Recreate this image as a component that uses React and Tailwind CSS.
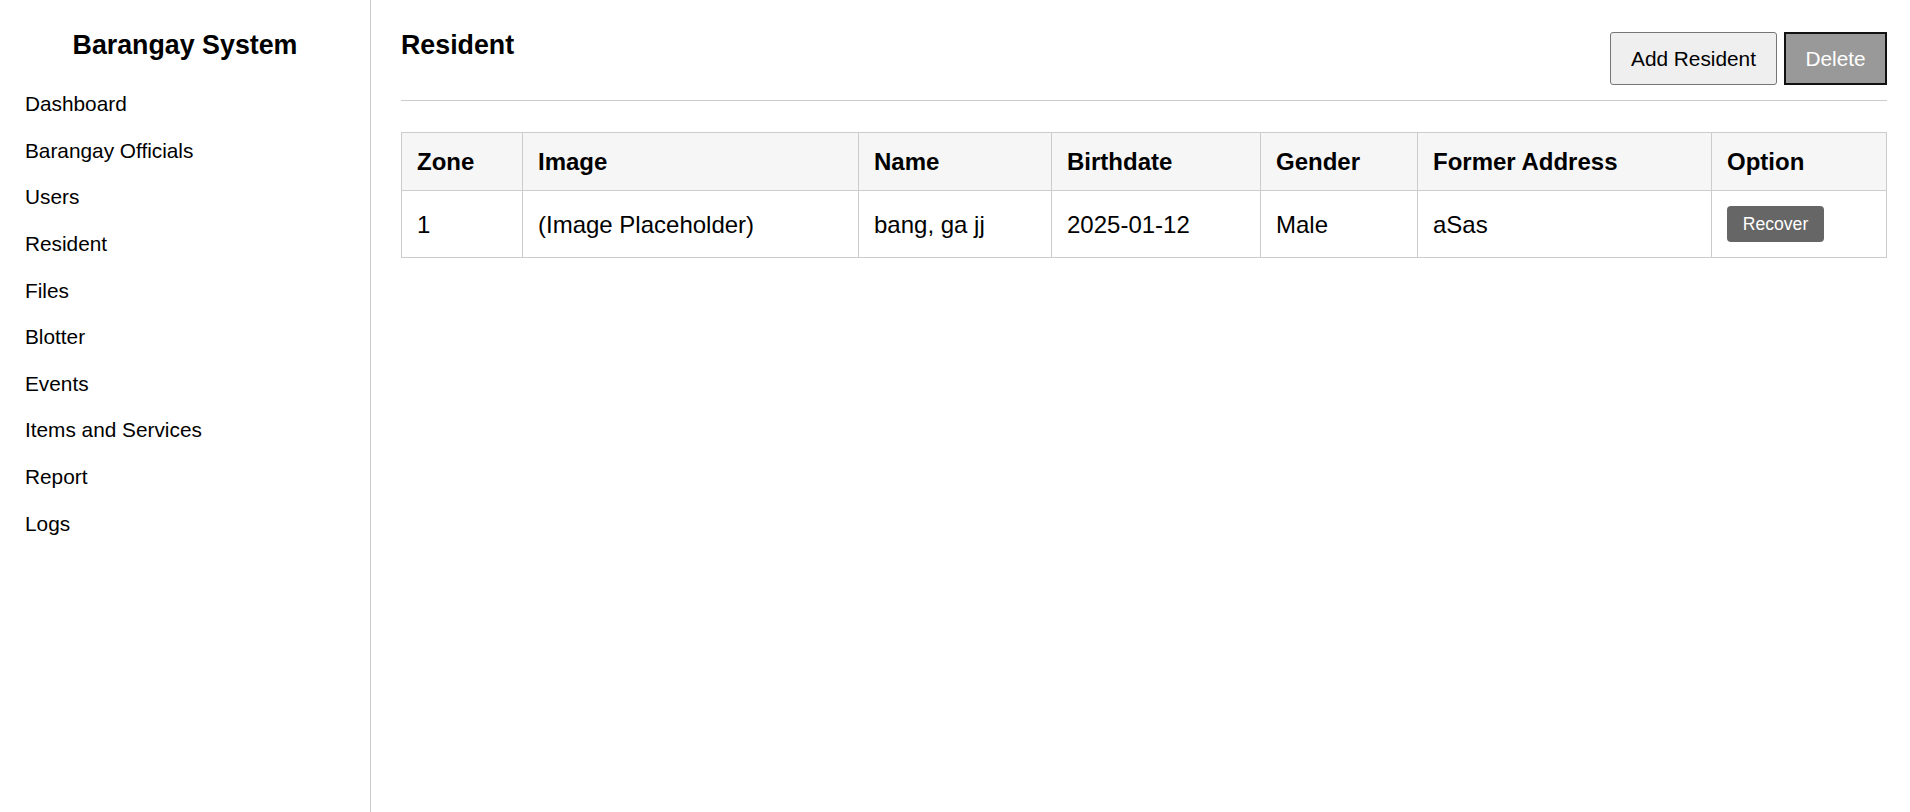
const menu = [
  "Dashboard",
  "Barangay Officials",
  "Users",
  "Resident",
  "Files",
  "Blotter",
  "Events",
  "Items and Services",
  "Report",
  "Logs",
];

const columns = [
  { label: "Zone", w: "w-[121px]" },
  { label: "Image", w: "w-[336px]" },
  { label: "Name", w: "w-[193px]" },
  { label: "Birthdate", w: "w-[209px]" },
  { label: "Gender", w: "w-[157px]" },
  { label: "Former Address", w: "w-[294px]" },
  { label: "Option", w: "w-[175px]" },
];

const residents = [
  { zone: "1", image: "(Image Placeholder)", name: "bang, ga jj", birthdate: "2025-01-12", gender: "Male", address: "aSas" },
];

export default function App() {
  return (
    <div className="flex min-h-[812px] bg-white text-black font-['Liberation_Sans',Arial,sans-serif]">
      <aside className="w-[371px] shrink-0 border-r border-[#cccccc]">
        <h1 className="pt-[30px] text-center text-[26.8px] font-bold leading-[31px]">Barangay System</h1>
        <nav className="mt-[20px]">
          {menu.map((item) => (
            <div key={item} className="pl-[25px] py-[11.3px] text-[20.8px] leading-[24px]">
              {item}
            </div>
          ))}
        </nav>
      </aside>

      <main className="flex-1 pl-[30px] pr-[24px]">
        <div className="flex items-start justify-between border-b border-[#cccccc] pb-[15px]">
          <h2 className="pt-[30px] text-[26.8px] font-bold leading-[31px]">Resident</h2>
          <div className="flex gap-[7px] pt-[32px]">
            <button className="h-[53px] w-[167px] rounded-[3px] border border-[#767676] bg-[#efefef] text-[20.8px]">
              Add Resident
            </button>
            <button className="h-[53px] w-[103px] border-2 border-[#111111] bg-[#999999] text-[20.8px] text-white">
              Delete
            </button>
          </div>
        </div>

        <table className="mt-[31px] w-full table-fixed border-collapse text-[24px]">
          <thead>
            <tr className="bg-[#f6f6f6]">
              {columns.map((c) => (
                <th key={c.label} className={`${c.w} border border-[#cccccc] px-[15px] py-[15px] text-left font-bold leading-[27px]`}>
                  {c.label}
                </th>
              ))}
            </tr>
          </thead>
          <tbody>
            {residents.map((r, i) => (
              <tr key={i}>
                <td className="border border-[#cccccc] px-[15px] py-[15px] leading-[27px]">{r.zone}</td>
                <td className="border border-[#cccccc] px-[15px] py-[15px] leading-[27px]">{r.image}</td>
                <td className="border border-[#cccccc] px-[15px] py-[15px] leading-[27px]">{r.name}</td>
                <td className="border border-[#cccccc] px-[15px] py-[15px] leading-[27px]">{r.birthdate}</td>
                <td className="border border-[#cccccc] px-[15px] py-[15px] leading-[27px]">{r.gender}</td>
                <td className="border border-[#cccccc] px-[15px] py-[15px] leading-[27px]">{r.address}</td>
                <td className="border border-[#cccccc] px-[15px] py-[15px] leading-[27px]">
                  <button className="block h-[36px] w-[97px] rounded-[4px] bg-[#666666] text-[17.6px] text-white">
                    Recover
                  </button>
                </td>
              </tr>
            ))}
          </tbody>
        </table>
      </main>
    </div>
  );
}
